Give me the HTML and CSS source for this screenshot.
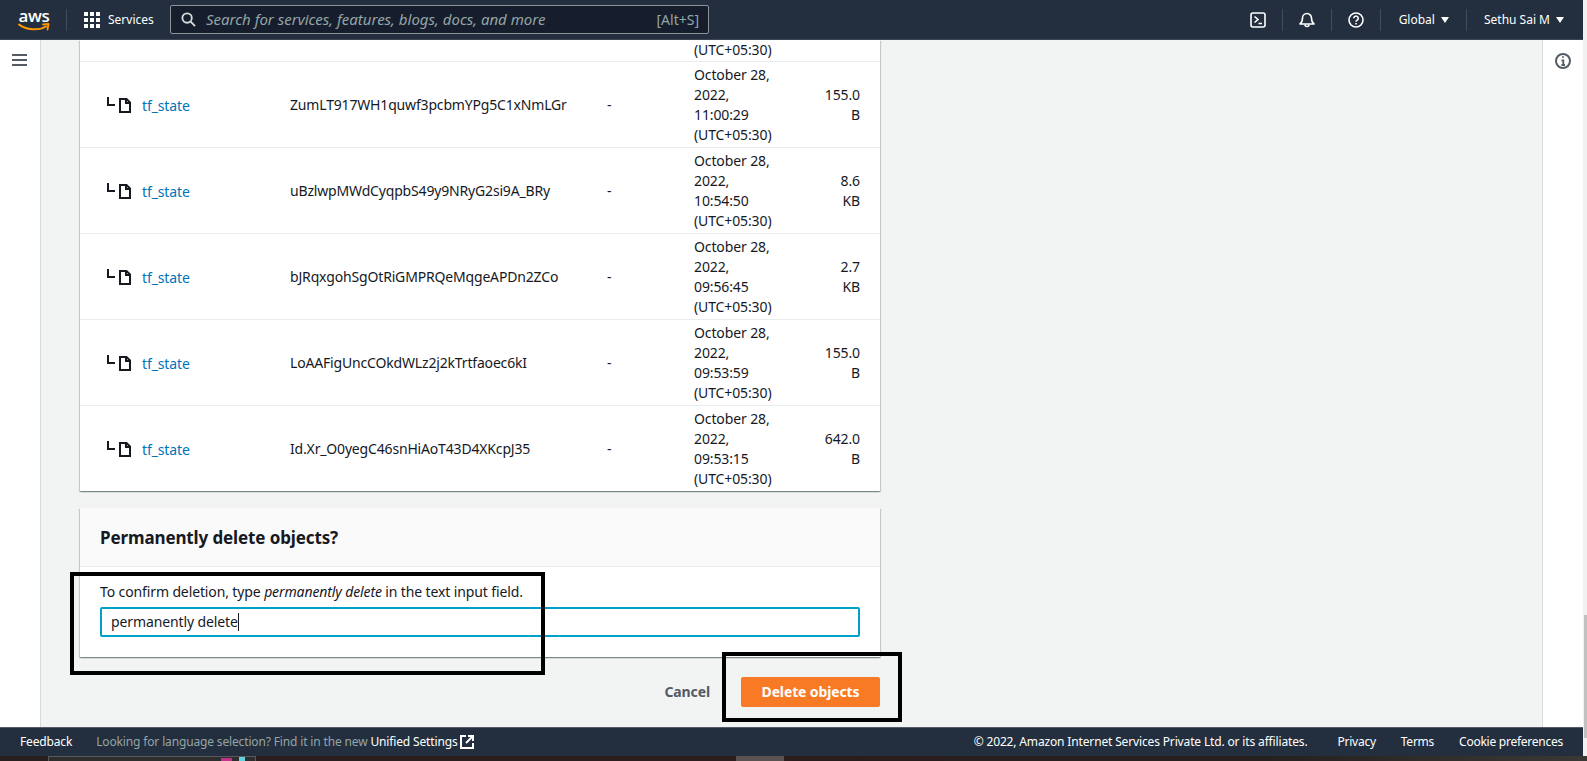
FILE: index.html
```html
<!DOCTYPE HTML>
<html>
<head>
    <title>Delete objects</title>
    <meta charset="utf-8">
    <link rel="stylesheet" href="styles.css">
</head>
<body>
<div class="window">
    <div class="page">
        <!--top nav-->
        <header class="nav">
            <a class="logo">
                <span class="logo-text">aws</span>
                <svg class="logo-smile" width="32" height="9" viewBox="0 0 32 9">
                    <path d="M1 1.5C8 7 21 8 28 3.5" fill="none" stroke="#f90" stroke-width="2" stroke-linecap="round"/>
                    <path d="M25 1.5L30.5 1L29.5 6.5" fill="none" stroke="#f90" stroke-width="1.8" stroke-linecap="round" stroke-linejoin="round"/>
                </svg>
            </a>
            <span class="nav-sep nav-sep-first"></span>
            <a class="services">
                <svg class="grid-icon" width="16" height="16" viewBox="0 0 16 16" fill="#fff">
                    <rect x="0" y="0" width="4" height="4"/><rect x="6" y="0" width="4" height="4"/><rect x="12" y="0" width="4" height="4"/>
                    <rect x="0" y="6" width="4" height="4"/><rect x="6" y="6" width="4" height="4"/><rect x="12" y="6" width="4" height="4"/>
                    <rect x="0" y="12" width="4" height="4"/><rect x="6" y="12" width="4" height="4"/><rect x="12" y="12" width="4" height="4"/>
                </svg>
                <span>Services</span>
            </a>
            <div class="search">
                <svg width="15" height="15" viewBox="0 0 16 16" fill="none" stroke="#d5dbdb" stroke-width="2">
                    <circle cx="6.5" cy="6.5" r="5"/><path d="M10 10l5 5"/>
                </svg>
                <span class="search-text">Search for services, features, blogs, docs, and more</span>
                <span class="search-key">[Alt+S]</span>
            </div>
            <div class="nav-right">
                <svg class="nav-icon" width="16" height="16" viewBox="0 0 16 16" fill="none" stroke="#fff" stroke-width="1.6">
                    <rect x="1" y="1" width="14" height="14" rx="2"/><path d="M4.5 4.5L8 7.5L4.5 10.5M8.5 11.5H12"/>
                </svg>
                <span class="nav-sep"></span>
                <svg class="nav-icon" width="16" height="16" viewBox="0 0 16 16" fill="none" stroke="#fff" stroke-width="1.6" stroke-linejoin="round">
                    <path d="M1 12c2-1.5 2.5-3 2.5-6a4.500 4.500 0 0 1 9 0c0 3 .5 4.500 2.500 6z"/><path d="M6 12.500a2 2 0 0 0 4 0"/>
                </svg>
                <span class="nav-sep"></span>
                <svg class="nav-icon" width="16" height="16" viewBox="0 0 16 16" fill="none" stroke="#fff" stroke-width="1.6">
                    <circle cx="8" cy="8" r="7"/><path d="M5.800 6.200a2.200 2.200 0 1 1 3.400 1.900c-.8.5-1.200.9-1.200 1.700"/><path d="M8 11v1.500"/>
                </svg>
                <span class="nav-sep"></span>
                <a class="nav-menu nav-global">Global<i class="caret-down"></i></a>
                <span class="nav-sep"></span>
                <a class="nav-menu nav-user">Sethu Sai M<i class="caret-down"></i></a>
            </div>
        </header>

        <div class="middle">
            <aside class="rail rail-left">
                <svg width="15" height="12" viewBox="0 0 15 12" fill="#545b64">
                    <rect width="15" height="2"/><rect y="5" width="15" height="2"/><rect y="10" width="15" height="2"/>
                </svg>
            </aside>

            <main class="content">
                <div class="card">
                    <table class="objects">
                        <colgroup>
                            <col class="col-name"><col class="col-key"><col class="col-type"><col class="col-date"><col class="col-size">
                        </colgroup>
                        <tr class="row-cut">
                            <td></td><td></td><td></td><td class="cell-date">(UTC+05:30)</td><td></td>
                        </tr>
                        <tr>
                            <td class="cell-name"><i class="corner"></i><svg class="file-icon" width="12" height="15" viewBox="0 0 12 15" fill="none" stroke="#16191f" stroke-width="2"><path d="M1 1H7.500L11 4.500V14H1z"/><path d="M7 1V5H11"/></svg><a class="link">tf_state</a></td>
                            <td class="cell-key">ZumLT917WH1quwf3pcbmYPg5C1xNmLGr</td>
                            <td class="cell-type">-</td>
                            <td class="cell-date">October 28, 2022, 11:00:29 (UTC+05:30)</td>
                            <td class="cell-size">155.0 B</td>
                        </tr>
                        <tr>
                            <td class="cell-name"><i class="corner"></i><svg class="file-icon" width="12" height="15" viewBox="0 0 12 15" fill="none" stroke="#16191f" stroke-width="2"><path d="M1 1H7.500L11 4.500V14H1z"/><path d="M7 1V5H11"/></svg><a class="link">tf_state</a></td>
                            <td class="cell-key">uBzlwpMWdCyqpbS49y9NRyG2si9A_BRy</td>
                            <td class="cell-type">-</td>
                            <td class="cell-date">October 28, 2022, 10:54:50 (UTC+05:30)</td>
                            <td class="cell-size">8.6 KB</td>
                        </tr>
                        <tr>
                            <td class="cell-name"><i class="corner"></i><svg class="file-icon" width="12" height="15" viewBox="0 0 12 15" fill="none" stroke="#16191f" stroke-width="2"><path d="M1 1H7.500L11 4.500V14H1z"/><path d="M7 1V5H11"/></svg><a class="link">tf_state</a></td>
                            <td class="cell-key">bJRqxgohSgOtRiGMPRQeMqgeAPDn2ZCo</td>
                            <td class="cell-type">-</td>
                            <td class="cell-date">October 28, 2022, 09:56:45 (UTC+05:30)</td>
                            <td class="cell-size">2.7 KB</td>
                        </tr>
                        <tr>
                            <td class="cell-name"><i class="corner"></i><svg class="file-icon" width="12" height="15" viewBox="0 0 12 15" fill="none" stroke="#16191f" stroke-width="2"><path d="M1 1H7.500L11 4.500V14H1z"/><path d="M7 1V5H11"/></svg><a class="link">tf_state</a></td>
                            <td class="cell-key">LoAAFigUncCOkdWLz2j2kTrtfaoec6kI</td>
                            <td class="cell-type">-</td>
                            <td class="cell-date">October 28, 2022, 09:53:59 (UTC+05:30)</td>
                            <td class="cell-size">155.0 B</td>
                        </tr>
                        <tr>
                            <td class="cell-name"><i class="corner"></i><svg class="file-icon" width="12" height="15" viewBox="0 0 12 15" fill="none" stroke="#16191f" stroke-width="2"><path d="M1 1H7.500L11 4.500V14H1z"/><path d="M7 1V5H11"/></svg><a class="link">tf_state</a></td>
                            <td class="cell-key">Id.Xr_O0yegC46snHiAoT43D4XKcpJ35</td>
                            <td class="cell-type">-</td>
                            <td class="cell-date">October 28, 2022, 09:53:15 (UTC+05:30)</td>
                            <td class="cell-size">642.0 B</td>
                        </tr>
                    </table>
                </div>

                <div class="card card-confirm">
                    <h2 class="confirm-title">Permanently delete objects?</h2>
                    <div class="confirm-body">
                        <p class="confirm-label">To confirm deletion, type <em>permanently delete</em> in the text input field.</p>
                        <div class="confirm-input">permanently delete<i class="text-caret"></i></div>
                    </div>
                </div>

                <div class="actions">
                    <a class="btn-cancel">Cancel</a>
                    <a class="btn-delete">Delete objects</a>
                </div>

                <!--black marks drawn on the screenshot-->
                <div class="mark mark-input"></div>
                <div class="mark mark-button"></div>
            </main>

            <aside class="rail rail-right">
                <svg width="16" height="16" viewBox="0 0 16 16" fill="none" stroke="#545b64" stroke-width="2">
                    <circle cx="8" cy="8" r="7"/><path d="M6.500 7.500H8.300V12M6.500 12H10M7.300 4H8.700" stroke-width="1.800"/>
                </svg>
            </aside>
        </div>

        <!--footer-->
        <footer class="foot">
            <a class="foot-feedback">Feedback</a>
            <span class="foot-note">Looking for language selection? Find it in the new <a class="foot-link">Unified Settings</a></span>
            <svg class="foot-ext" width="14" height="14" viewBox="0 0 14 14" fill="none" stroke="#fff" stroke-width="2">
                <path d="M6 1H1V13H13V8"/><path d="M8 1H13V6M13 1L6 8"/>
            </svg>
            <div class="foot-right">
                <span class="foot-copy">© 2022, Amazon Internet Services Private Ltd. or its affiliates.</span>
                <a>Privacy</a>
                <a>Terms</a>
                <a>Cookie preferences</a>
            </div>
        </footer>
    </div>
    <div class="scrollbar"><div class="scroll-thumb"></div></div>
</div>

<!--strip of the desktop under the browser-->
<div class="strip">
    <div class="strip-box"><i class="strip-pink"></i><i class="strip-cyan"></i></div>
    <div class="strip-thumb"></div>
</div>
</body>
</html>
```

FILE: styles.css
```css
*{ margin:0; padding:0; box-sizing:border-box; }
html,body{
    height:100%;
    overflow:hidden;
}
body{
    display:flex;
    flex-direction:column;
    background:#2a1f1f;
    font-family:"Noto Sans","Open Sans",sans-serif;
    font-size:14px;
    line-height:20px;
    letter-spacing:-0.12px;
    color:#16191f;
}
i{ display:block; }

.window{
    height:756px;
    display:flex;
}
.page{
    flex:1;
    min-width:0;
    display:flex;
    flex-direction:column;
}
.scrollbar{
    width:4px;
    background:#f1f1f1;
    padding-top:615px;
}
.scroll-thumb{
    height:123px;
    margin-left:1px;
    background:#c1c1c1;
}

/* nav */
.nav{
    height:40px;
    flex:none;
    display:flex;
    align-items:center;
    background:#232f3e;
    border-bottom:1px solid #3b4652;
    color:#fff;
    font-size:12px;
    letter-spacing:0;
}
.logo{
    width:32px;
    height:22px;
    margin-left:18px;
    display:flex;
    flex-direction:column;
    align-items:center;
}
.logo-text{
    font-family:"Open Sans",sans-serif;
    font-size:17px;
    font-weight:600;
    line-height:14px;
    letter-spacing:-0.3px;
    color:#fff;
}
.logo-smile{ flex:none; }
.nav-sep{
    width:1px;
    height:22px;
    flex:none;
    background:#414d5c;
}
.nav-sep-first{ margin-left:16px; }
.services{
    display:flex;
    align-items:center;
    margin-left:17px;
    width:86px;
    flex:none;
}
.grid-icon{ flex:none; margin-right:8px; }
.search{
    width:539px;
    height:29px;
    flex:none;
    display:flex;
    align-items:center;
    padding:0 9px 0 10px;
    background:#161e2d;
    border:1px solid #8d9499;
    border-radius:2px;
}
.search-text{
    margin-left:10px;
    padding-bottom:2px;
    flex:1;
    font-style:italic;
    font-size:15px;
    color:#95a5a6;
}
.search-key{
    font-size:14px;
    color:#95a5a6;
}
.nav-right{
    margin-left:auto;
    display:flex;
    align-items:center;
}
.nav-icon{ flex:none; margin:0 16px; }
.nav-menu{
    display:flex;
    align-items:center;
    white-space:nowrap;
}
.nav-global{ padding:0 17px 0 18px; }
.nav-user{ padding:0 19px 0 17px; }
.caret-down{
    margin-left:6px;
    width:0;
    height:0;
    border-left:4px solid transparent;
    border-right:4px solid transparent;
    border-top:6px solid #fff;
}

/* page body */
.middle{
    flex:1;
    min-height:0;
    display:flex;
    background:#f2f3f3;
}
.rail{
    flex:none;
    background:#fff;
    display:flex;
    justify-content:center;
}
.rail-left{
    width:41px;
    border-right:1px solid #d5dbdb;
    padding-top:14px;
    padding-right:1px;
}
.rail-right{
    width:41px;
    border-left:1px solid #d5dbdb;
    padding-top:13px;
}
.content{
    flex:1;
    min-width:0;
    position:relative;
    overflow:hidden;
    padding:0 0 0 39px;
}
.card{
    width:800px;
    background:#fff;
    box-shadow:0 1px 1px 0 rgba(0,28,36,.3),1px 1px 1px 0 rgba(0,28,36,.15),-1px 1px 1px 0 rgba(0,28,36,.15);
}

/* table */
.objects{
    width:800px;
    table-layout:fixed;
    border-collapse:collapse;
}
.col-name{ width:200px; }
.col-key{ width:320px; }
.col-type{ width:84px; }
.col-date{ width:124px; }
.col-size{ width:72px; }
.objects td{
    padding:3px 10px 2px;
    border-bottom:1px solid #eaeded;
    vertical-align:middle;
}
.objects tr:last-child td{ border-bottom:0; }
.objects .row-cut td{ padding:0 10px 1px; }
.objects .cell-name{
    padding-left:27px;
    white-space:nowrap;
}
.cell-name>*{ display:inline-block; vertical-align:middle; }
.corner{
    width:8px;
    height:9px;
    margin-top:-8px;
    border-left:2px solid #16191f;
    border-bottom:2px solid #16191f;
}
.file-icon{ margin-left:4px; }
.link{
    margin-left:11px;
    color:#0073bb;
}
.objects .cell-key{
    white-space:nowrap;
    letter-spacing:-0.17px;
}
.objects .cell-type{ padding-left:7px; }
.objects .cell-date{ padding-right:30px; white-space:normal; }
.objects .row-cut .cell-date{ padding-right:0; }
.objects .cell-size{
    padding:0 20px 0 12px;
    text-align:right;
}

/* confirm card */
.card-confirm{ margin-top:17px; }
.confirm-title{
    height:59px;
    padding:2px 20px 0;
    display:flex;
    align-items:center;
    font-size:17px;
    line-height:22px;
    font-weight:700;
    background:#fafafa;
    border-bottom:1px solid #eaeded;
}
.confirm-body{ padding:15px 20px 20px; }
.confirm-label{ margin-bottom:5px; }
.confirm-input{
    height:30px;
    padding:0 9px;
    display:flex;
    align-items:center;
    background:#fff;
    border:2px solid #00a1c9;
    border-radius:2px;
}
.text-caret{
    width:1px;
    height:18px;
    background:#16191f;
}

.actions{
    width:800px;
    margin-top:20px;
    display:flex;
    justify-content:flex-end;
    align-items:center;
}
.btn-cancel{
    margin-right:31px;
    font-weight:700;
    color:#545b64;
}
.btn-delete{
    width:139px;
    height:30px;
    display:flex;
    align-items:center;
    justify-content:center;
    background:#f97a24;
    border-radius:2px;
    font-weight:700;
    color:#fff;
}

/* black rectangles over the page */
.mark{
    position:absolute;
    border:4px solid #000;
}
.mark-input{
    left:29px;
    top:532px;
    width:475px;
    height:103px;
}
.mark-button{
    left:681px;
    top:612px;
    width:180px;
    height:70px;
}

/* footer */
.foot{
    height:29px;
    flex:none;
    display:flex;
    align-items:center;
    padding:0 20px;
    background:#232f3e;
    border-top:1px solid #545b64;
    font-size:12px;
    letter-spacing:-0.15px;
    color:#fff;
}
.foot-note{
    margin-left:24px;
    color:#95a5a6;
}
.foot-link{ color:#fff; }
.foot-ext{ margin-left:2px; flex:none; }
.foot-right{
    margin-left:auto;
    display:flex;
    gap:25px;
    letter-spacing:-0.25px;
}
.foot-copy{
    margin-right:5px;
    letter-spacing:-0.15px;
}

/* desktop strip */
.strip{
    flex:1;
    display:flex;
    background:linear-gradient(90deg,#2a1f1f 0,#2a1d1c 50%,#26201f 80%,#3a3835 100%);
}
.strip-box{
    width:208px;
    margin-left:48px;
    position:relative;
    background:#2e2e2e;
    border:1px solid #5a5a5a;
    border-bottom:0;
}
.strip-pink{
    position:absolute;
    left:172px;
    top:1px;
    width:11px;
    height:4px;
    background:#c2348c;
}
.strip-cyan{
    position:absolute;
    left:190px;
    top:0;
    width:6px;
    height:5px;
    background:#5fd3e0;
}
.strip-thumb{
    width:48px;
    margin-left:480px;
    background:#5a5250;
}
```
